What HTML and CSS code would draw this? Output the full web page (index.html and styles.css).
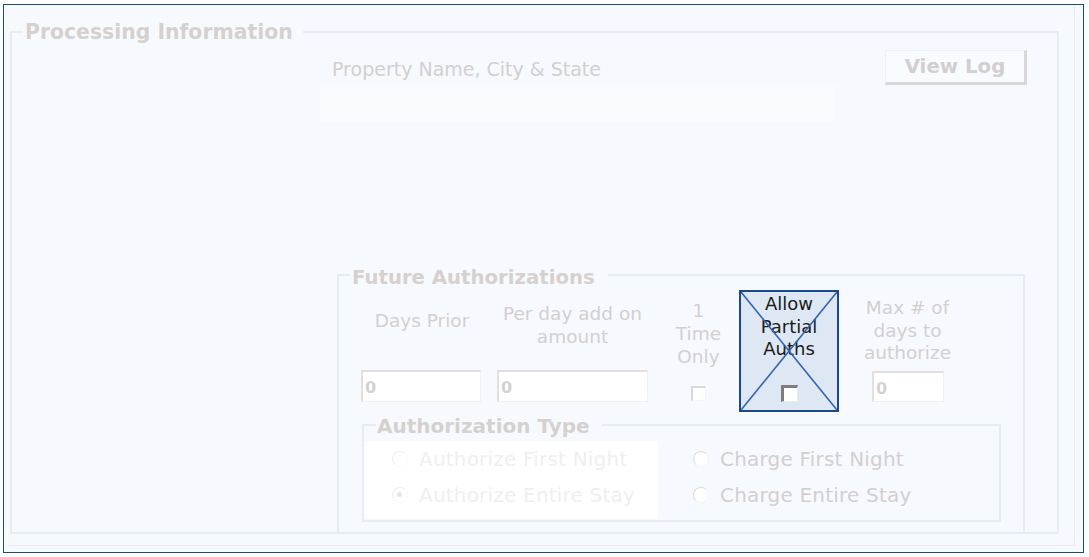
FILE: index.html
```html
<!DOCTYPE html>
<html>
<head>
<meta charset="utf-8">
<link rel="stylesheet" href="styles.css">
</head>
<body>
<div class="frame">
  <div class="panel">
    <fieldset class="fs fs-proc">
      <legend class="lg lg-proc">Processing Information</legend>
      <div class="head-row">
        <div class="prop">
          <div class="prop-label">Property Name, City &amp; State</div>
          <div class="prop-box"></div>
        </div>
        <div class="btn-log">View Log</div>
      </div>
      <fieldset class="fs fs-future">
        <legend class="lg lg-future">Future Authorizations</legend>
        <div class="fa-cols">
          <div class="col col1">
            <div class="lbl">Days Prior</div>
            <div class="inp inp-days">0</div>
          </div>
          <div class="col col2">
            <div class="lbl">Per day add on<br>amount</div>
            <div class="inp inp-addon">0</div>
          </div>
          <div class="col col3">
            <div class="lbl">1<br>Time<br>Only</div>
            <div class="chk chk-faint"></div>
          </div>
          <div class="col col4">
            <div class="partial">
              <div class="partial-lbl">Allow<br>Partial<br>Auths</div>
              <div class="chk chk-dark"></div>
              <svg class="xmark" viewBox="0 0 100 100" preserveAspectRatio="none">
                <line x1="0" y1="0" x2="100" y2="100" vector-effect="non-scaling-stroke"/>
                <line x1="100" y1="0" x2="0" y2="100" vector-effect="non-scaling-stroke"/>
              </svg>
            </div>
          </div>
          <div class="col col5">
            <div class="lbl">Max # of<br>days to<br>authorize</div>
            <div class="inp inp-max">0</div>
          </div>
        </div>
        <fieldset class="fs fs-auth">
          <legend class="lg lg-auth">Authorization Type</legend>
          <div class="auth-grid">
            <div class="auth-left">
              <div class="opt opt-ghost"><span class="radio radio-ghost"></span>Authorize First Night</div>
              <div class="opt opt-ghost"><span class="radio radio-ghost radio-on"></span>Authorize Entire Stay</div>
            </div>
            <div class="auth-right">
              <div class="opt"><span class="radio"></span>Charge First Night</div>
              <div class="opt"><span class="radio"></span>Charge Entire Stay</div>
            </div>
          </div>
        </fieldset>
      </fieldset>
    </fieldset>
  </div>
</div>
</body>
</html>
```

FILE: styles.css
```css
* { box-sizing: border-box; }

body {
  margin: 0;
  background: #ffffff;
  font-family: "DejaVu Sans", Verdana, sans-serif;
  color: #d3cfcf;
}

.frame {
  margin: 4px 0 0 3px;
  width: 1081px;
  height: 549px;
  border: 1px solid #1b4a86;
  background: #f6faff;
  padding: 0 8px 6px 4px;
  display: flex;
}

.panel {
  flex: 1;
  border-right: 1px solid #e6ecf4;
  border-bottom: 1px solid #e6ecf4;
  padding: 0 15px 0 2px;
}

.fs {
  margin: 0;
  padding: 0;
  min-width: 0;
  border: 2px solid #e6ecf4;
}

.lg {
  font-size: 20px;
  font-weight: bold;
  line-height: 24px;
  color: #d6d1ce;
}

.fs-proc {
  margin-top: 14px;
  height: 515px;
}

.lg-proc {
  margin-left: 11px;
  padding: 1px 10px 0 2px;
  font-size: 20.4px;
}

.head-row {
  display: flex;
  padding-left: 308px;
}

.prop {
  width: 515px;
  padding-top: 14px;
}

.prop-label {
  font-size: 19px;
  line-height: 22px;
  padding-left: 12px;
}

.prop-box {
  margin-top: 5px;
  height: 37px;
  background: #f9fcff;
}

.btn-log {
  margin-left: 50px;
  margin-top: 6px;
  width: 142px;
  height: 35px;
  border-style: solid;
  border-width: 1px 3px 3px 1px;
  border-color: #eef0f3 #d8d8d8 #d8d8d8 #eef0f3;
  background: #f8fbff;
  font-size: 19.8px;
  font-weight: bold;
  color: #d3cfcf;
  display: flex;
  align-items: center;
  justify-content: center;
  padding-bottom: 1px;
}

.fs-future {
  margin: 138px 0 0 325px;
  width: 688px;
  height: 274px;
}

.lg-future {
  margin-left: 11px;
  padding: 6px 13px 0 2px;
  font-size: 19.7px;
}

.fa-cols {
  display: flex;
  padding-left: 22px;
  height: 122px;
}

.col {
  display: flex;
  flex-direction: column;
  text-align: center;
}

.lbl {
  font-size: 18.5px;
  line-height: 23px;
}

.col1 { width: 122px; padding-top: 19px; }
.col1 .lbl { height: 61px; }

.col2 { width: 151px; margin-left: 14px; padding-top: 12px; }
.col2 .lbl { height: 68px; }

.col3 { width: 77px; margin-left: 12px; padding-top: 9px; align-items: center; }
.col3 .lbl { width: 100%; }

.col4 { width: 100px; margin-left: 2px; }

.col5 { width: 95px; margin-left: 21px; padding-top: 7px; }
.col5 .lbl { line-height: 22.5px; }

.inp {
  height: 32px;
  background: #ffffff;
  border-style: solid;
  border-width: 2px 1px 1px 2px;
  border-color: #e0e0e0 #f1f1f1 #f1f1f1 #e0e0e0;
  font-size: 16px;
  font-weight: bold;
  color: #d2d2d2;
  text-align: left;
  padding-left: 2px;
  display: flex;
  align-items: center;
  padding-top: 2px;
}

.inp-days { width: 120px; }
.inp-addon { width: 151px; }
.inp-max { width: 72px; height: 31px; margin: 6.5px 0 0 12px; }

.chk {
  background: #ffffff;
  border-style: solid;
}

.chk-faint {
  margin-top: 18px;
  width: 15px;
  height: 15px;
  border-width: 2px 1px 1px 2px;
  border-color: #d9d9d9 #f4f4f4 #f4f4f4 #d9d9d9;
}

.partial {
  position: relative;
  margin-top: 0;
  height: 125px;
  border: 2px solid #1c4a86;
  background: #dde8f4;
  padding-top: 1px;
  display: flex;
  flex-direction: column;
  align-items: center;
}

.partial-lbl {
  font-size: 18px;
  line-height: 22.5px;
  color: #1a1a1a;
}

.chk-dark {
  margin-top: 24.5px;
  width: 17px;
  height: 17px;
  border-width: 3px 1px 1px 3px;
  border-color: #7d7d7d #e9e9e9 #e9e9e9 #7d7d7d;
}

.xmark {
  position: absolute;
  left: 0;
  top: 0;
  width: 100%;
  height: 100%;
  stroke: #3763ae;
  stroke-width: 1.6;
}

.fs-auth {
  margin: 0 0 0 23px;
  width: 639px;
  height: 110px;
}

.lg-auth {
  margin-left: 12px;
  padding: 2px 12px 0 1px;
}

.auth-grid {
  display: flex;
}

.auth-left {
  width: 294px;
  margin-top: 3px;
  height: 78px;
  background: #ffffff;
  padding-left: 28px;
}

.auth-right {
  padding-left: 35px;
  margin-top: 3px;
}

.opt {
  display: flex;
  align-items: center;
  height: 36px;
  gap: 11px;
  font-size: 20px;
  letter-spacing: 0.2px;
  color: #d3cfcf;
  white-space: nowrap;
}

.opt-ghost { color: #efefef; }

.radio {
  position: relative;
  width: 16px;
  height: 16px;
  border-radius: 50%;
  background: #ffffff;
  border: 1.5px solid;
  border-color: #dcdcdc #f4f4f4 #f4f4f4 #dcdcdc;
  flex: none;
}

.radio-ghost {
  border-color: #eeeeee #fafafa #fafafa #eeeeee;
}

.radio-on::after {
  content: "";
  position: absolute;
  left: 4px;
  top: 4px;
  width: 5px;
  height: 5px;
  border-radius: 50%;
  background: #e6e6e6;
}
```
